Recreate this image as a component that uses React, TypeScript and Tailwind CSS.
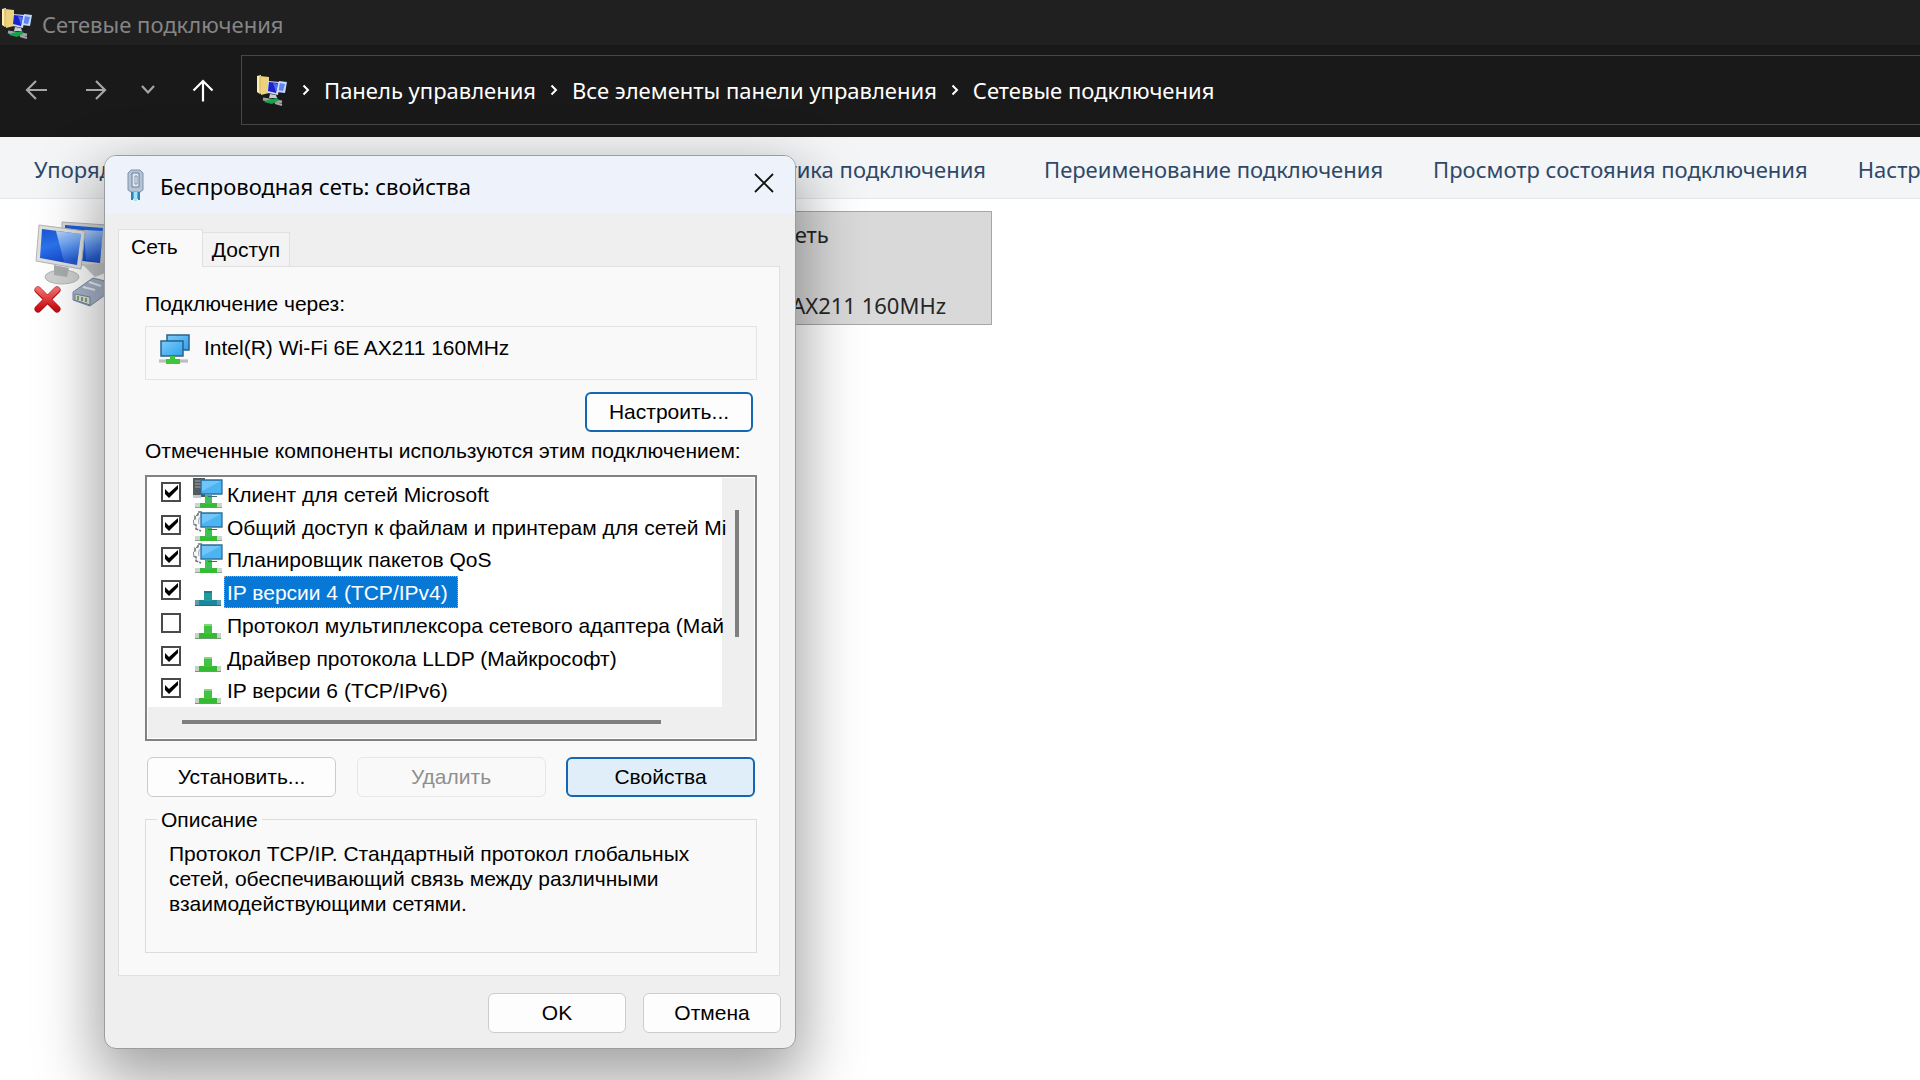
import { ReactNode } from 'react'

type Kind = 'client' | 'service' | 'protocol' | 'selected'

const components: { name: string; kind: Kind; checked: boolean }[] = [
  { name: 'Клиент для сетей Microsoft', kind: 'client', checked: true },
  { name: 'Общий доступ к файлам и принтерам для сетей Mi', kind: 'service', checked: true },
  { name: 'Планировщик пакетов QoS', kind: 'service', checked: true },
  { name: 'IP версии 4 (TCP/IPv4)', kind: 'selected', checked: true },
  { name: 'Протокол мультиплексора сетевого адаптера (Май', kind: 'protocol', checked: false },
  { name: 'Драйвер протокола LLDP (Майкрософт)', kind: 'protocol', checked: true },
  { name: 'IP версии 6 (TCP/IPv6)', kind: 'protocol', checked: true },
]

function FolderNetIcon() {
  return (
    <svg className="shrink-0" width="32" height="32" viewBox="0 0 32 32" aria-hidden="true">
      <path d="M2 2l4-1v18l-1 1-3-2z" fill="#fbefb4" />
      <path d="M5 2l9 1v16l-8 2z" fill="#ecd27c" />
      <path d="M5 2v18" stroke="#c9a850" strokeWidth="1" />
      <path d="M24 7l8 1-2 11-8-1z" fill="#c3d8fa" />
      <path d="M24 9l6 1-2 7-6-1z" fill="#5f86ee" />
      <path d="M13 7l12 1-2 13-10-2z" fill="#cdd9f6" />
      <path d="M14 8l9 1-2 10-8-2z" fill="#1a22cc" />
      <path d="M18 9l5 1-2 8z" fill="#4f6cec" />
      <path d="M15 20l6 1 1 3h-8z" fill="#c9ccd0" />
      <path d="M8 25l19 3" stroke="#9da2a6" strokeWidth="3" />
      <path d="M9 28c4-3 8-3 13-4l2 2-7 4z" fill="#17a34a" />
      <path d="M20 29l7 2" stroke="#a3a7aa" strokeWidth="2" />
    </svg>
  )
}

function PlugIcon() {
  return (
    <svg width="17" height="32" viewBox="0 0 17 32" aria-hidden="true">
      <path d="M4 1h9l3 3v17l-3 2H4l-3-2V4z" fill="#b4c3d5" stroke="#7f92ab" />
      <path d="M5 4h7v14H5z" fill="#dfe7f0" stroke="#6d8099" />
      <path d="M8 7h2v8H8z" fill="#fff" stroke="#8292a8" />
      <path d="M4 23h9v7H4z" fill="#51b1dc" />
      <path d="M5 23v8M12 23v8" stroke="#2784b5" strokeWidth="2" />
      <path d="M8.500 23v9" stroke="#a8e0f6" strokeWidth="3" />
    </svg>
  )
}

function AdapterIcon() {
  return (
    <svg width="32" height="31" viewBox="0 0 32 31" aria-hidden="true">
      <defs>
        <linearGradient id="adapter" x1="0" y1="0" x2="1" y2="1">
          <stop offset="0" stopColor="#7accfa" />
          <stop offset="1" stopColor="#32a0ec" />
        </linearGradient>
      </defs>
      <path d="M9 1h22v15H9z" fill="url(#adapter)" stroke="#2a6288" strokeWidth="1.5" />
      <path d="M3 7h22v15H3z" fill="url(#adapter)" stroke="#2a6288" strokeWidth="1.5" />
      <path d="M1 25h29v4H1z" fill="#d4d6d6" />
      <path d="M1 27h29" stroke="#a4a8a8" />
      <path d="M12 22h5v3h5v5H8v-5h4z" fill="#3fc43b" />
    </svg>
  )
}

function ComponentIcon({ kind }: { kind: Kind }) {
  if (kind === 'protocol' || kind === 'selected') {
    const sel = kind === 'selected'
    return (
      <svg className="mt-[7px] shrink-0" width="30" height="24" viewBox="0 0 30 24" aria-hidden="true">
        <path d="M2 17h26v6H2z" fill={sel ? '#5d9cab' : '#c3d3c3'} />
        <path d="M6 17h18v6H6z" fill={sel ? '#1c86a0' : '#35b934'} />
        <path d="M11 8h8v10h-8z" fill={sel ? '#239a9b' : '#43c242'} />
        <path d="M11 8h8v2h-8z" fill={sel ? '#177d8a' : '#82d77d'} />
        <path d="M2 22.500h26" stroke={sel ? '#12718c' : '#6d9c6d'} />
      </svg>
    )
  }
  return (
    <svg className="shrink-0" width="30" height="31" viewBox="0 0 30 31" aria-hidden="true">
      {kind === 'client' ? (
        <>
          <path d="M0 0h12v19H0z" fill="#53595c" />
          <path d="M2 3h6M2 6h6M2 9h6" stroke="#a3aaad" />
          <path d="M0 17h8v3H0z" fill="#c2c6c8" />
        </>
      ) : (
        <>
          <path
            d="M9 1L5 1v3L2 5v3L0 9v4l3 1v4l5 2"
            fill="#f5f7f8"
            stroke="#6b7276"
            strokeWidth="1.500"
            strokeDasharray="4 1"
          />
          <path d="M9 5c-3 1-4 4-3 8" fill="none" stroke="#9aa1a5" />
        </>
      )}
      <path d="M8 2h21v14H8z" fill="#4db4f4" stroke="#2c6f9b" strokeWidth="1.300" />
      <path d="M9 3h19L9 13z" fill="#8bd2fb" opacity="0.600" />
      <path d="M2 25h27v5H2z" fill="#ccd6cc" />
      <path d="M2 29.500h27" stroke="#93a393" />
      <path d="M7 25h17v5H7z" fill="#37ba35" />
      <path d="M12 17h7v9h-7z" fill="#3fbf55" />
      <path d="M15 18.500h9" stroke="#3a6f7a" />
    </svg>
  )
}

function ComputersIcon() {
  return (
    <svg className="shrink-0" width="84" height="94" viewBox="0 0 84 94" aria-hidden="true">
      <defs>
        <linearGradient id="screen" x1="0" y1="0" x2="0.300" y2="1">
          <stop offset="0" stopColor="#1d55d2" />
          <stop offset="0.500" stopColor="#2a74ee" />
          <stop offset="1" stopColor="#1848c8" />
        </linearGradient>
        <linearGradient id="glare" x1="0" y1="0" x2="0.200" y2="1">
          <stop offset="0" stopColor="#d8ecff" stopOpacity="0.850" />
          <stop offset="1" stopColor="#6fb0ff" stopOpacity="0.150" />
        </linearGradient>
        <linearGradient id="cross" x1="0" y1="0" x2="0" y2="1">
          <stop offset="0" stopColor="#f26a6a" />
          <stop offset="1" stopColor="#cc0f16" />
        </linearGradient>
      </defs>
      <path d="M28 1l45 3-3 42-42-4z" fill="#d5d8d8" stroke="#b0b4b6" />
      <path d="M31 4l38 3-3 35-35-4z" fill="url(#screen)" />
      <path d="M50 9l19 1-3 31-14-2z" fill="url(#glare)" />
      <path d="M49 44l20-2 12 6-20 8z" fill="#c4c8c8" />
      <ellipse cx="28" cy="56" rx="17" ry="7" fill="#cfd2d1" stroke="#b4b7b7" />
      <path d="M20 44l15 3-2 9-13-2z" fill="#a9adad" />
      <path d="M5 4l46 6-4 38-45-8z" fill="#e0e2e0" stroke="#b2b5b5" />
      <path d="M8 8l39 5-4 31-37-7z" fill="url(#screen)" />
      <path d="M22 10l25 3-4 31-13-3z" fill="url(#glare)" />
      <path d="M39 71l20-14 12 3v14l-15 11-17-6z" fill="#a9b7cb" stroke="#7e8da4" />
      <path d="M41 73l15 3v8l-15-5z" fill="#dbe2ea" stroke="#76859c" />
      <path d="M44 75v4M48 76v4M52 77v4" stroke="#8ba354" strokeWidth="2" />
      <path d="M49 66l12 3M55 61l12 4" stroke="#e9eef4" strokeWidth="2" />
      <path d="M4 69l19 19M23 69L4 88" stroke="#a81117" strokeWidth="7" strokeLinecap="round" />
      <path d="M4 68.500l19 19M23 68.500L4 87.500" stroke="url(#cross)" strokeWidth="5.500" strokeLinecap="round" />
    </svg>
  )
}

function Separator() {
  return (
    <svg className="shrink-0" width="8" height="12" viewBox="0 0 8 12" fill="none" stroke="#fff" strokeWidth="2" aria-hidden="true">
      <path d="M1.500 1.500L6 6l-4.500 4.500" />
    </svg>
  )
}

function NavButton({ label, className, children }: { label: string; className: string; children: ReactNode }) {
  return (
    <button type="button" aria-label={label} className={className}>
      <svg width="24" height="24" viewBox="0 0 24 24" fill="none" stroke="currentColor" strokeWidth="2.200" aria-hidden="true">
        {children}
      </svg>
    </button>
  )
}

function Explorer() {
  return (
    <div className="min-h-screen bg-white font-['Noto_Sans','Open_Sans',sans-serif] text-[22px] leading-7">
      <header className="bg-[#191919]">
        <div className="flex h-[45px] items-center bg-[#202020]">
          <FolderNetIcon />
          <h1 className="ml-[10px] pt-[2px] text-[#858585]">Сетевые подключения</h1>
        </div>
        <nav className="flex items-center pt-[10px] pb-3">
          <div className="flex w-[241px] shrink-0 items-center pl-6">
            <NavButton label="Назад" className="text-[#a6a6a6]">
              <path d="M23 12H4M12 3l-9 9 9 9" />
            </NavButton>
            <NavButton label="Вперёд" className="ml-9 text-[#a6a6a6]">
              <path d="M2 12h18.500M12 3l9 9-9 9" />
            </NavButton>
            <NavButton label="Последние расположения" className="ml-7 text-[#a6a6a6]">
              <path d="M6 8l6 6.500L18 8" />
            </NavButton>
            <NavButton label="Вверх" className="ml-[31px] text-white">
              <path d="M12 23.500V3M2.500 12.500L12 3l9.500 9.500" />
            </NavButton>
          </div>
          <div className="flex h-[70px] flex-1 items-center border border-r-0 border-[#484848] pl-[13px] whitespace-nowrap text-white">
            <FolderNetIcon />
            <div className="ml-[15px] flex items-center gap-[14px]">
              <Separator />
              <a href="#panel">Панель управления</a>
              <Separator />
              <a href="#all">Все элементы панели управления</a>
              <Separator />
              <a href="#net">Сетевые подключения</a>
            </div>
          </div>
        </nav>
      </header>

      <div className="flex h-[62px] items-center overflow-hidden border-b border-[#e3e7ea] bg-[#f3f5f7] pt-[2px] pl-[34px] whitespace-nowrap text-[#2f4867]">
        <div className="flex w-[952px] shrink-0 justify-between">
          <button type="button">Упорядочить</button>
          <button type="button">Диагностика подключения</button>
        </div>
        <div className="ml-[58px] flex gap-[50px]">
          <button type="button">Переименование подключения</button>
          <button type="button">Просмотр состояния подключения</button>
          <button type="button">Настр</button>
        </div>
      </div>

      <main className="flex items-start pt-3 pl-[34px]">
        <div className="w-[486px] shrink-0 pt-[10px]">
          <ComputersIcon />
        </div>
        <div className="flex h-[114px] w-[472px] flex-col justify-between border border-[#a6a6a6] bg-[#d9d9d9] pt-2 pb-[5px] pl-[104px] whitespace-nowrap text-[#262626]">
          <p>Беспроводная сеть</p>
          <p>Intel(R) Wi-Fi 6E AX211 160MHz</p>
        </div>
      </main>
    </div>
  )
}

const button = 'h-10 rounded-md bg-[#fdfdfd]'

function PropertiesDialog() {
  return (
    <div
      role="dialog"
      aria-labelledby="dialog-title"
      className="absolute top-[155px] left-[104px] w-[692px] overflow-hidden rounded-xl border border-[#9a9da0] bg-[#efefef] font-['Liberation_Sans',sans-serif] text-[21px] text-black shadow-[0_24px_60px_8px_rgba(0,0,0,0.36)]"
    >
      <div className="flex h-[58px] items-center bg-[#eef3fb] pr-[20px] pl-[22px]">
        <PlugIcon />
        <h2 id="dialog-title" className="ml-4 flex-1 pt-[2px] font-['Noto_Sans','Open_Sans',sans-serif] text-[22px] leading-7">
          Беспроводная сеть: свойства
        </h2>
        <button type="button" aria-label="Закрыть" className="pb-1">
          <svg width="22" height="22" viewBox="0 0 22 22" stroke="#111" strokeWidth="1.800" aria-hidden="true">
            <path d="M2 2l18 18M20 2L2 20" />
          </svg>
        </button>
      </div>

      <div className="px-[13px] pt-[15px] pb-[15px]">
        <div role="tablist" className="flex items-end leading-6">
          <button type="button" role="tab" aria-selected="true" className="relative -mb-px h-[38px] w-[85px] border border-b-0 border-[#e0e0e0] bg-[#f9f9f9] pb-1 pl-3 text-left">
            Сеть
          </button>
          <button type="button" role="tab" aria-selected="false" className="h-[34px] w-[87px] border border-b-0 border-l-0 border-[#e0e0e0] bg-[#f3f3f3]">
            Доступ
          </button>
        </div>

        <div role="tabpanel" className="mr-[2px] border border-[#e0e0e0] bg-[#f9f9f9] pt-[25px] pr-[22px] pb-[22px] pl-[26px]">
          <p className="leading-6">Подключение через:</p>
          <div className="mt-[10px] flex h-[54px] border border-[#e4e4e4] pt-[7px] pl-3">
            <AdapterIcon />
            <span className="ml-[14px] leading-[28px]">Intel(R) Wi-Fi 6E AX211 160MHz</span>
          </div>
          <div className="mt-3 mr-1 flex justify-end">
            <button type="button" className={`${button} w-[168px] border-2 border-[#1467b3]`}>
              Настроить...
            </button>
          </div>
          <p className="mt-[7px] leading-6 whitespace-nowrap">Отмеченные компоненты используются этим подключением:</p>

          <div className="mt-3 border-2 border-[#7e8387] bg-white p-px">
            <div className="flex bg-[#efefef]">
              <div className="grid h-[229px] min-w-0 flex-1 grid-rows-7 bg-white pl-[13px]">
                {components.map(({ name, kind, checked }) => (
                  <label key={name} className="flex min-h-0 items-start whitespace-nowrap">
                    <span className="relative mt-1 mr-3 size-5 shrink-0">
                      <input type="checkbox" defaultChecked={checked} className="peer block size-5 appearance-none border-2 border-[#4a4a4a] bg-white" />
                      <svg className="absolute top-0 left-0 hidden peer-checked:block" width="20" height="20" viewBox="0 0 20 20" aria-hidden="true">
                        <path d="M4 7v5l4 4 9-9V3l-9 8z" fill="#000" />
                      </svg>
                    </span>
                    <ComponentIcon kind={kind} />
                    <span
                      className={
                        kind === 'selected'
                          ? 'ml-px h-8 border border-dotted border-[#d99a52] bg-[#0878d7] pr-[9px] pl-[2px] leading-8 text-white'
                          : 'ml-1 h-8 leading-[34px]'
                      }
                    >
                      {name}
                    </span>
                  </label>
                ))}
              </div>
              <div className="w-8 shrink-0 pt-8 pl-[13px]">
                <div className="h-[127px] w-1 bg-[#7f7f7f]" />
              </div>
            </div>
            <div className="h-[31px] bg-[#efefef] pt-[13px] pr-[93px] pl-[34px]">
              <div className="h-1 bg-[#7f7f7f]" />
            </div>
          </div>

          <div className="mt-4 flex justify-between pr-[2px] pl-[2px]">
            <button type="button" className={`${button} w-[189px] border border-[#cccccc]`}>
              Установить...
            </button>
            <button type="button" disabled className="h-10 w-[189px] rounded-md border border-[#e6e6e6] bg-[#f9f9f9] text-[#8f8f8f]">
              Удалить
            </button>
            <button type="button" className="h-10 w-[189px] rounded-md border-2 border-[#1467b3] bg-[#e0eef9]">
              Свойства
            </button>
          </div>

          <fieldset className="mt-[9px] border border-[#dcdcdc] px-[11px] pb-9">
            <legend className="px-1 pt-[2px] leading-6">Описание</legend>
            <p className="pt-[9px] pl-3 leading-[25px] whitespace-nowrap">
              Протокол TCP/IP. Стандартный протокол глобальных
              <br />
              сетей, обеспечивающий связь между различными
              <br />
              взаимодействующими сетями.
            </p>
          </fieldset>
        </div>

        <div className="mt-[17px] flex justify-end gap-[17px] pr-px">
          <button type="button" className={`${button} w-[138px] border border-[#cccccc]`}>
            OK
          </button>
          <button type="button" className={`${button} w-[138px] border border-[#cccccc]`}>
            Отмена
          </button>
        </div>
      </div>
    </div>
  )
}

export default function App() {
  return (
    <div className="relative min-h-screen overflow-hidden">
      <Explorer />
      <PropertiesDialog />
    </div>
  )
}
